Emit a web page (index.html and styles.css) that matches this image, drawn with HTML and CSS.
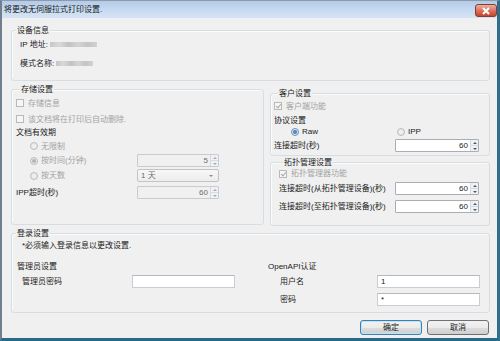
FILE: index.html
```html
<!DOCTYPE html>
<html lang="zh-CN">
<head>
    <meta charset="UTF-8">
    <title>将更改无伺服拉式打印设置.</title>
    <link rel="stylesheet" href="styles.css">
</head>
<body>
    <div class="window">
        <div class="titlebar">
            <span class="title">将更改无伺服拉式打印设置.</span>
            <span class="close">
                <svg width="10" height="8" viewBox="0 0 10 8"><path d="M2 1 L8 7 M8 1 L2 7" stroke="#fff" stroke-width="2"/></svg>
            </span>
        </div>

        <div class="content">
            <div class="group info">
                <span class="legend">设备信息</span>
                <div class="info-row first">IP 地址:<span class="blur ip"></span></div>
                <div class="info-row second">模式名称:<span class="blur model"></span></div>
            </div>

            <div class="middle">
                <div class="group storage">
                    <span class="legend">存储设置</span>
                    <div class="row r1 off"><span class="cb"></span>存储信息</div>
                    <div class="row r2 off"><span class="cb"></span>该文档将在打印后自动删除.</div>
                    <div class="row r3">文档有效期</div>
                    <div class="row r4 off"><span class="lbl sub"><span class="radio"></span>无限制</span></div>
                    <div class="row r5">
                        <span class="lbl sub off"><span class="radio checked-off"></span>按时间(分钟)</span>
                        <div class="spin disabled"><span class="val">5</span><span class="arrows"><i class="up"></i><i class="down"></i></span></div>
                    </div>
                    <div class="row r6">
                        <span class="lbl sub off"><span class="radio"></span>按天数</span>
                        <div class="combo"><span class="val">1 天</span><i class="drop"></i></div>
                    </div>
                    <div class="row r7">
                        <span class="lbl">IPP超时(秒)</span>
                        <div class="spin disabled"><span class="val">60</span><span class="arrows"><i class="up"></i><i class="down"></i></span></div>
                    </div>
                </div>

                <div class="right-col">
                    <div class="group client">
                        <span class="legend">客户设置</span>
                        <div class="row c1 off"><span class="cb checked"></span>客户端功能</div>
                        <div class="row c2">协议设置</div>
                        <div class="row c3">
                            <span class="opt raw"><span class="radio on"></span>Raw</span>
                            <span class="opt"><span class="radio"></span>IPP</span>
                        </div>
                        <div class="row c4">
                            <span class="rlbl">连接超时(秒)</span>
                            <div class="spin wide"><span class="val">60</span><span class="arrows"><i class="up"></i><i class="down"></i></span></div>
                        </div>
                    </div>

                    <div class="group topo">
                        <span class="legend">拓扑管理设置</span>
                        <div class="row t1 off"><span class="cb checked"></span>拓扑管理器功能</div>
                        <div class="row t2">
                            <span class="tlbl">连接超时(从拓扑管理设备)(秒)</span>
                            <div class="spin wide"><span class="val">60</span><span class="arrows"><i class="up"></i><i class="down"></i></span></div>
                        </div>
                        <div class="row t3">
                            <span class="tlbl">连接超时(至拓扑管理设备)(秒)</span>
                            <div class="spin wide"><span class="val">60</span><span class="arrows"><i class="up"></i><i class="down"></i></span></div>
                        </div>
                    </div>
                </div>
            </div>

            <div class="group login">
                <span class="legend">登录设置</span>
                <div class="row note">*必须输入登录信息以更改设置.</div>
                <div class="login-cols">
                    <div class="col-left">
                        <div class="row head">管理员设置</div>
                        <div class="row field">
                            <span class="flbl">管理员密码</span>
                            <span class="textbox admin"></span>
                        </div>
                    </div>
                    <div class="col-right">
                        <div class="row head">OpenAPI认证</div>
                        <div class="row field">
                            <span class="flbl">用户名</span>
                            <span class="textbox">1</span>
                        </div>
                        <div class="row field second">
                            <span class="flbl">密码</span>
                            <span class="textbox">*</span>
                        </div>
                    </div>
                </div>
            </div>

            <div class="buttons">
                <button class="btn default">确定</button>
                <button class="btn">取消</button>
            </div>
        </div>
    </div>
</body>
</html>
```

FILE: styles.css
```css
* {
    box-sizing: border-box;
}

body {
    margin: 0;
    font-family: "Liberation Sans", "Noto Sans CJK SC", sans-serif;
    font-size: 8px;
    color: #1a1a1a;
    background: #f0f0f0;
}

.window {
    width: 500px;
    height: 341px;
    border-top: 1px solid #8e9aa6;
    border-left: 2px solid #6f7f8e;
    border-right: 3px solid #2f6e8c;
    border-bottom: 3px solid #2b6a87;
    background: #f0f0f0;
    overflow: hidden;
}

.titlebar {
    height: 17px;
    display: flex;
    align-items: center;
    justify-content: space-between;
    padding: 0 0 0 2px;
    background: linear-gradient(#b3cbe8, #c9dcf1 60%, #d6e4f4);
}

.title {
    font-size: 8px;
    line-height: 11px;
    margin-top: -1px;
}

.close {
    width: 22px;
    height: 13px;
    margin-top: 2px;
    display: flex;
    align-items: center;
    justify-content: center;
    border: 1px solid #8a3b2d;
    border-radius: 3px;
    background: linear-gradient(#eab0a2, #d9745f 50%, #c4442c);
}

.content {
    padding: 12px 7px 0 9px;
}

/* group boxes */
.group {
    border: 1px solid #d6dde3;
    border-radius: 3px;
    box-shadow: inset 1px 1px 0 #fbfbfb;
}

.legend {
    display: block;
    width: fit-content;
    margin: -6px 0 0 4px;
    padding: 0 1px;
    line-height: 11px;
    background: #f0f0f0;
}

.row {
    display: flex;
    align-items: center;
    line-height: 11px;
}

.off {
    color: #a3a3a3;
}

/* device info */
.info {
    height: 51px;
}

.info-row {
    display: flex;
    align-items: center;
    line-height: 11px;
    padding-left: 8px;
}

.info-row.first {
    margin-top: 3px;
}

.info-row.second {
    margin-top: 8px;
}

.blur {
    display: inline-block;
    height: 5px;
    margin-left: 2px;
    background: linear-gradient(90deg, #c6c6c6, #d8d8d8 20%, #c2c2c2 40%, #d4d4d4 60%, #c4c4c4 80%, #d2d2d2);
    filter: blur(0.6px);
}

.blur.ip {
    width: 47px;
}

.blur.model {
    width: 37px;
}

/* middle area */
.middle {
    display: flex;
    align-items: flex-start;
    gap: 6px;
    margin-top: 8px;
}

.storage {
    width: 253px;
    height: 136px;
    padding-left: 4px;
}

.storage .r1 { height: 12px; margin-top: 2px; }
.storage .r2 { height: 12px; margin-top: 4px; }
.storage .r3 { height: 11px; margin-top: 2px; }
.storage .r4 { height: 12px; margin-top: 2px; }
.storage .r5 { height: 13px; margin-top: 2px; }
.storage .r6 { height: 13px; margin-top: 2px; }
.storage .r7 { height: 13px; margin-top: 4px; }

.lbl {
    width: 121px;
    display: flex;
    align-items: center;
}

.lbl.sub {
    padding-left: 14px;
}

.right-col {
    flex: 1;
    display: flex;
    flex-direction: column;
    margin-top: 4px;
}

.client {
    height: 63px;
    padding: 0 10px 0 3px;
}

.client .c1 { height: 12px; margin-top: 1px; }
.client .c2 { height: 11px; margin-top: 3px; }
.client .c3 { height: 11px; }
.client .c4 { height: 13px; margin-top: 2px; justify-content: space-between; }

.opt {
    display: flex;
    align-items: center;
}

.opt.raw {
    width: 106px;
    margin-left: 17px;
}

.topo {
    height: 64px;
    margin-top: 6px;
    padding: 0 10px 0 8px;
}

.topo .t1 { height: 11px; }
.topo .t2 { height: 13px; margin-top: 3px; justify-content: space-between; }
.topo .t3 { height: 13px; margin-top: 5px; justify-content: space-between; }

/* checkbox and radio */
.cb {
    width: 8px;
    height: 8px;
    margin-right: 4px;
    border: 1px solid #b9b9b9;
    background: #f6f6f6;
    position: relative;
}

.cb.checked::after {
    content: "";
    position: absolute;
    left: 2px;
    top: 0;
    width: 2px;
    height: 4px;
    border: solid #a8a8a8;
    border-width: 0 1px 1px 0;
    transform: rotate(40deg);
}

.radio {
    width: 8px;
    height: 8px;
    margin-right: 3px;
    border: 1px solid #bcbcbc;
    border-radius: 50%;
    background: radial-gradient(#f4f4f4, #e2e2e2);
    display: flex;
    align-items: center;
    justify-content: center;
}

.radio.checked-off::after,
.radio.on::after {
    content: "";
    width: 4px;
    height: 4px;
    border-radius: 50%;
    background: #b3b3b3;
}

.radio.on {
    border-color: #6d8fb4;
}

.radio.on::after {
    background: radial-gradient(#58a2e6, #1f5ea8);
}

/* spin box */
.spin {
    width: 82px;
    height: 13px;
    display: flex;
    border: 1px solid #abadb3;
    background: #fff;
    border-radius: 1px;
}

.spin.wide {
    width: 84px;
}

.spin.disabled {
    border-color: #cbcbcb;
    background: #f0f0f0;
    color: #6d6d6d;
}

.spin .val {
    flex: 1;
    text-align: right;
    padding-right: 2px;
    line-height: 11px;
}

.arrows {
    width: 8px;
    display: flex;
    flex-direction: column;
    border-left: 1px solid #d6dbe2;
    background: #eef2f6;
}

.arrows i {
    flex: 1;
    display: flex;
    align-items: center;
    justify-content: center;
}

.arrows i::after {
    content: "";
    border-left: 2px solid transparent;
    border-right: 2px solid transparent;
}

.arrows .up::after {
    border-bottom: 2px solid #4a5a6e;
}

.arrows .down::after {
    border-top: 2px solid #4a5a6e;
}

.arrows .up {
    border-bottom: 1px solid #d6dbe2;
}

.disabled .arrows i::after {
    border-bottom-color: #a9a9a9;
    border-top-color: #a9a9a9;
}

/* combo box */
.combo {
    width: 82px;
    height: 13px;
    display: flex;
    align-items: center;
    justify-content: space-between;
    padding: 0 5px 0 3px;
    border: 1px solid #c3c3c3;
    border-radius: 2px;
    background: linear-gradient(#f7f7f7, #ededed);
    color: #6d6d6d;
}

.drop {
    border-left: 2px solid transparent;
    border-right: 2px solid transparent;
    border-top: 2px solid #8a8a8a;
}

/* login */
.login {
    height: 80px;
    margin-top: 7px;
}

.login .note {
    height: 11px;
    margin-top: 1px;
    padding-left: 10px;
}

.login-cols {
    display: flex;
    margin-top: 10px;
}

.col-left {
    width: 256px;
    padding-left: 5px;
}

.col-right {
    flex: 1;
}

.head {
    height: 11px;
}

.field {
    height: 13px;
    margin-top: 3px;
}

.field.second {
    margin-top: 5px;
}

.col-left .flbl {
    width: 115px;
    padding-left: 5px;
}

.col-right .flbl {
    width: 109px;
    padding-left: 12px;
}

.textbox {
    height: 13px;
    width: 103px;
    padding-left: 3px;
    line-height: 11px;
    border: 1px solid #c9cdd3;
    border-top-color: #b5b9bf;
    background: #fff;
}

/* buttons */
.buttons {
    display: flex;
    justify-content: flex-end;
    gap: 5px;
    margin-top: 7px;
    padding-right: 1px;
}

.btn {
    width: 62px;
    height: 15px;
    padding: 0;
    font-family: "Liberation Sans", "Noto Sans CJK SC", sans-serif;
    font-size: 8px;
    line-height: 13px;
    color: #1a1a1a;
    border: 1px solid #707070;
    border-radius: 3px;
    background: linear-gradient(#f2f2f2, #ebebeb 50%, #dddddd 51%, #cfcfcf);
}

.btn.default {
    border-color: #3c7fb1;
    box-shadow: inset 0 0 0 1px #bde3f7;
}
```
